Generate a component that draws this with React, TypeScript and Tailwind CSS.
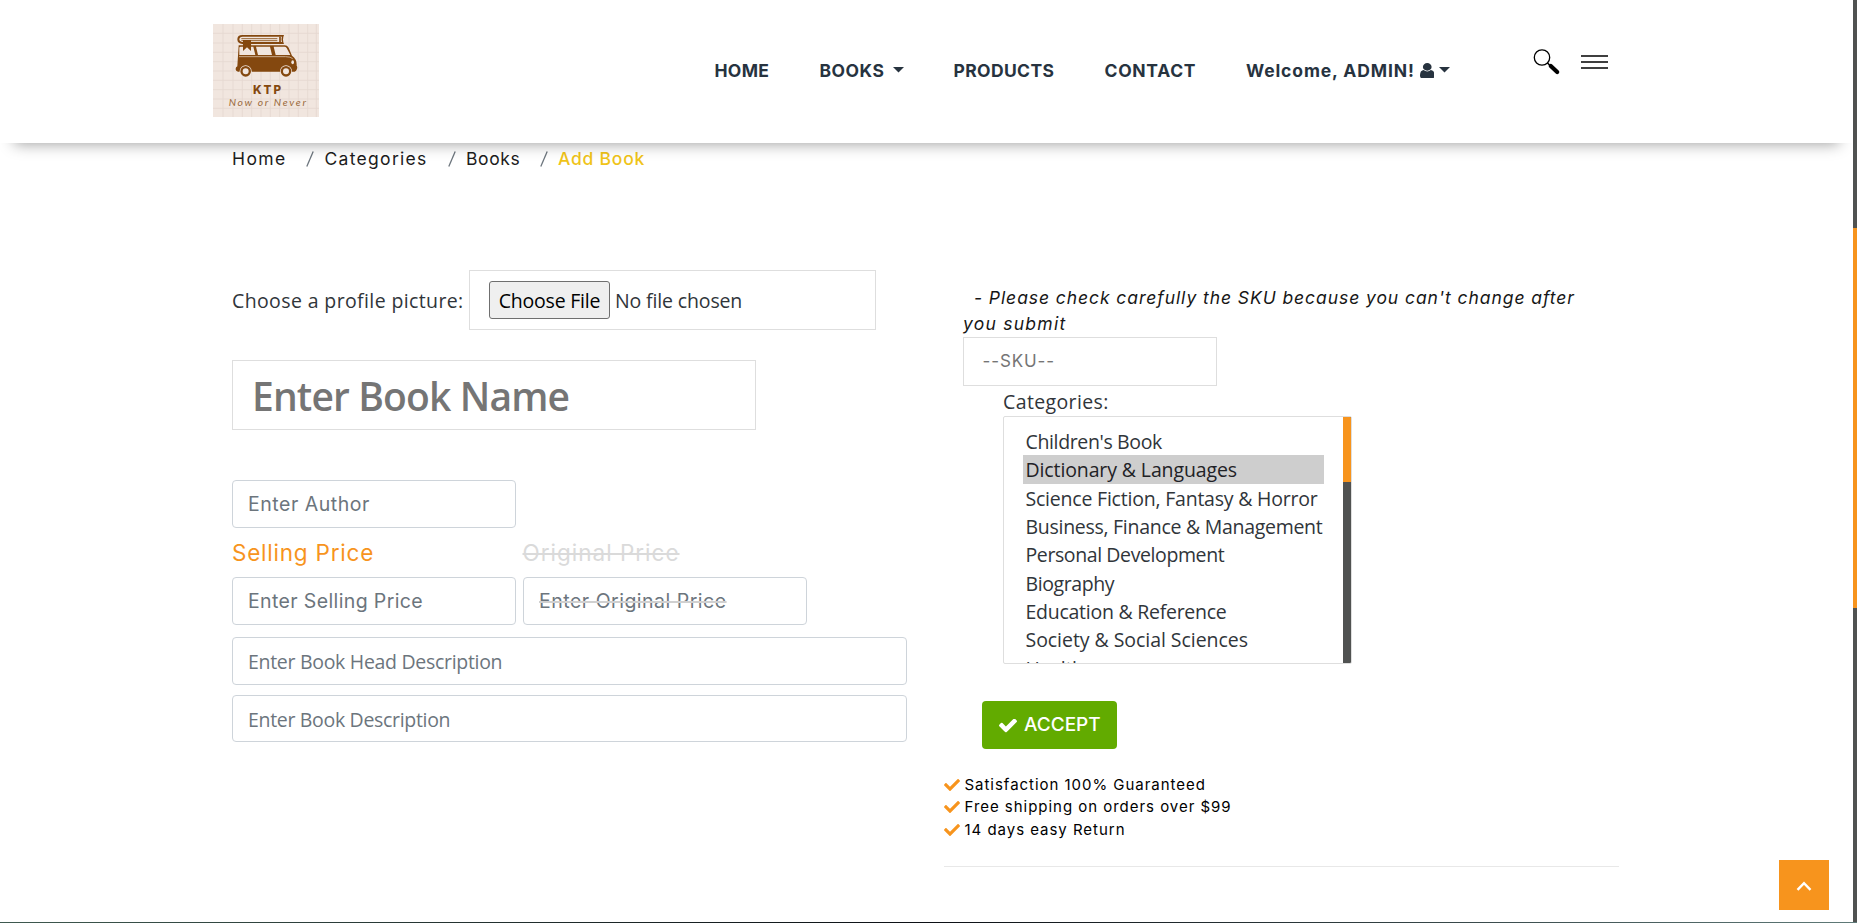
import { FaCheck } from "react-icons/fa";

const categories = [
  { name: "Children's Book", tracking: "tracking-[-0.36px]" },
  { name: "Dictionary & Languages", tracking: "tracking-[-0.12px]", selected: true },
  { name: "Science Fiction, Fantasy & Horror", tracking: "tracking-[-0.21px]" },
  { name: "Business, Finance & Management", tracking: "tracking-[-0.28px]" },
  { name: "Personal Development", tracking: "tracking-[-0.4px]" },
  { name: "Biography", tracking: "tracking-[-0.4px]" },
  { name: "Education & Reference", tracking: "tracking-[-0.26px]" },
  { name: "Society & Social Sciences", tracking: "tracking-[-0.05px]" },
  { name: "Health", tracking: "tracking-[-0.3px]" },
];

const perks = ["Satisfaction 100% Guaranteed", "Free shipping on orders over $99", "14 days easy Return"];

function Caret() {
  return (
    <svg className="h-[5.5px] w-[11px]" viewBox="0 0 11 5.5" fill="currentColor">
      <path d="M0 0h11L5.5 5.5z" />
    </svg>
  );
}

function UserIcon() {
  return (
    <svg className="ml-[5px] h-[15.5px] w-[14.5px]" viewBox="256 128 1280 1536" preserveAspectRatio="none" fill="currentColor">
      <path d="M1536 1399q0 109-62.5 187t-150.5 78h-854q-88 0-150.5-78t-62.5-187q0-85 8.5-160.5t31.5-152 58.5-131 94-89 134.5-34.5q131 128 313 128t313-128q76 0 134.5 34.5t94 89 58.5 131 31.5 152 8.5 160.5zm-256-887q0 159-112.5 271.5t-271.5 112.5-271.5-112.5-112.5-271.5 112.5-271.5 271.5-112.5 271.5 112.5 112.5 271.5z" />
    </svg>
  );
}

function AcceptIcon() {
  return (
    <svg className="mr-[7px] h-[14px] w-[18px]" viewBox="121 434 1550 1088" fill="currentColor">
      <path d="M1671 566q0 40-28 68l-724 724-136 136q-28 28-68 28t-68-28l-136-136-362-362q-28-28-28-68t28-68l136-136q28-28 68-28t68 28l294 295 656-657q28-28 68-28t68 28l136 136q28 28 28 68z" />
    </svg>
  );
}

function Logo() {
  return (
    <svg className="h-[93px] w-[106px] shrink-0" viewBox="39 42 318 279">
      <rect x="39" y="42" width="318" height="279" fill="#f1e6df" />
      <g stroke="#e5d9d1" strokeWidth="2.5">
        <path d="M69 42v279M99 42v279M127 42v279M155 42v279M183 42v279M211 42v279M239 42v279M267 42v279M295 42v279M323 42v279M349 42v279" />
        <path d="M39 70h318M39 99h318M39 127h318M39 155h318M39 183h318M39 211h318M39 239h318M39 267h318M39 295h318" />
      </g>
      <g fill="#84480f">
        <path d="M116 106h138q8 0 12 7l10 24q14 10 14 26v4q3 4 1 10t-7 8H114q-8-2-7-9 0-5 5-7z" />
        <path d="M127 75h125q-6 13 0 27H127q-15-1-15-14t15-13z" />
      </g>
      <path d="M128 80h118q-3 8 0 16H128q-10-1-10-8t10-8z" fill="#f1e6df" />
      <path d="M124 86h108M124 92h108" stroke="#84480f" strokeWidth="2.5" />
      <path d="M240 80v17" stroke="#84480f" strokeWidth="5" />
      <path d="M118 113q0-3 4-3h38l6 25h-48zM168 110h42l6 25h-42zM221 110h32q5 0 7 4l11 21h-44z" fill="#f1e6df" />
      <path d="M117 140h140q15 0 21 6" stroke="#d9bfa6" strokeWidth="2.5" fill="none" />
      <path d="M129 90h24v33l-12-11-12 11z" fill="#84480f" />
      <ellipse cx="278" cy="157" rx="4" ry="6" fill="#f1e6df" />
      {[137, 258].map((x) => (
        <g key={x}>
          <circle cx={x} cy="184" r="18" fill="#f1e6df" />
          <circle cx={x} cy="184" r="12.5" fill="#f1e6df" stroke="#84480f" strokeWidth="7" />
        </g>
      ))}
      <text x="159" y="251" textLength="84" fontFamily="Inter, sans-serif" fontWeight="800" fontSize="35" fill="#84480f">KTP</text>
      <text x="86" y="289" textLength="232" fontFamily="Lato, sans-serif" fontStyle="italic" fontSize="31" fill="#9a6a3c">Now or Never</text>
    </svg>
  );
}

function Header() {
  return (
    <header className="relative z-10 flex h-[143px] shrink-0 items-center bg-white pb-[2px] pl-[213px] shadow-[0_15px_14px_-14px_rgba(0,0,0,0.38)]">
      <Logo />
      <nav className="ml-[395.5px] flex shrink-0 items-center whitespace-nowrap text-[17.5px] leading-6 font-bold text-[#27333f]">
        <a className="w-[105px] tracking-[0.3px]">HOME</a>
        <a className="flex w-[134px] items-center tracking-[0.5px]">
          BOOKS
          <span className="ml-[9px] pb-[1px]"><Caret /></span>
        </a>
        <a className="w-[151px] tracking-[0.37px]">PRODUCTS</a>
        <a className="w-[141.5px] tracking-[0.69px]">CONTACT</a>
        <a className="flex w-[286.5px] items-center tracking-[0.88px]">
          Welcome, ADMIN!
          <UserIcon />
          <span className="ml-[4.5px] pb-[1px]"><Caret /></span>
        </a>
      </nav>
      <div className="flex shrink-0 items-center gap-5 pb-[18px]">
        <svg className="h-[28px] w-[28px]" viewBox="0 0 28 28" fill="none" stroke="#000">
          <circle cx="9" cy="9.5" r="7.7" strokeWidth="1.3" />
          <path d="M14.5 15l3 3" strokeWidth="1.6" />
          <path d="M17.8 18l6.4 6" strokeWidth="4.2" strokeLinecap="round" />
        </svg>
        <svg className="h-[14px] w-[27px]" viewBox="0 0 27 14" stroke="#000" strokeWidth="1.3">
          <path d="M0 1h27M0 7h27M0 13h27" />
        </svg>
      </div>
    </header>
  );
}

function Slash() {
  return (
    <svg className="mr-[10.5px] h-[16px] w-[8px] shrink-0" viewBox="0 0 8 16" fill="none" stroke="#6c757d" strokeWidth="1.3">
      <path d="M7.2.5L.8 15.5" />
    </svg>
  );
}

function Breadcrumb() {
  return (
    <nav className="flex h-6 items-center text-[17.5px] whitespace-nowrap text-[#1c1c1c]">
      <span className="w-[74px] tracking-[1.4px]">Home</span>
      <Slash />
      <span className="w-[123px] tracking-[1.3px]">Categories</span>
      <Slash />
      <span className="w-[73.5px] tracking-[0.6px]">Books</span>
      <Slash />
      <span className="font-medium tracking-[0.75px] text-[#f0c419]">Add Book</span>
    </nav>
  );
}

function BookForm() {
  return (
    <section className="flex w-[675px] flex-col font-['Open_Sans',sans-serif] text-[19.5px] whitespace-nowrap text-[#30353a]">
      <div className="flex h-[60px] items-center">
        <label className="w-[237px] pt-[2px] tracking-[0.38px]">Choose a profile picture:</label>
        <div className="flex h-[60px] w-[407px] items-center border border-[#dedede] pl-[19px]">
          <button className="h-[38px] w-[121px] rounded-[3px] border border-[#6f6f6f] bg-[#efefef] pt-[2px] tracking-[-0.22px] text-black">Choose File</button>
          <span className="ml-[5px] pt-[2px] tracking-[-0.14px]">No file chosen</span>
        </div>
      </div>
      <div className="mt-[30px] flex h-[70px] w-[524px] items-center border border-[#dedede] pt-[3px] pl-[19px] text-[39px] font-semibold tracking-[-0.86px] text-[#757575]">
        Enter Book Name
      </div>
      <div className="mt-[50px] flex h-12 w-[284px] items-center rounded-[4px] border border-[#ced4da] pt-[2px] pl-[15px] font-[Inter,sans-serif] text-[19.5px] tracking-[0.52px] text-[#6c757d]">
        Enter Author
      </div>
      <div className="mt-2 flex h-[34px] items-center font-[Inter,sans-serif] text-[22.5px]">
        <span className="w-[290.5px] tracking-[0.78px] text-[#f7941d]">Selling Price</span>
        <span className="tracking-[1px] text-[#dadada] line-through decoration-2">Original Price</span>
      </div>
      <div className="mt-[7px] flex gap-[7px] font-[Inter,sans-serif] text-[19.5px] text-[#6c757d]">
        <div className="flex h-12 w-[284px] items-center rounded-[4px] border border-[#ced4da] pt-[2px] pl-[15px] tracking-[0.37px]">Enter Selling Price</div>
        <div className="flex h-12 w-[284px] items-center rounded-[4px] border border-[#ced4da] pt-[2px] pl-[15px] tracking-[0.5px]">
          <span className="line-through decoration-[#d0d0d0] decoration-2">Enter Original Price</span>
        </div>
      </div>
      <div className="mt-3 flex h-12 items-center rounded-[4px] border border-[#ced4da] pt-[2px] pl-[15px] tracking-[-0.3px] text-[#6c757d]">Enter Book Head Description</div>
      <div className="mt-[10px] flex h-[47px] items-center rounded-[4px] border border-[#ced4da] pt-[2px] pl-[15px] tracking-[-0.32px] text-[#6c757d]">Enter Book Description</div>
    </section>
  );
}

function Sidebar() {
  return (
    <section className="flex w-[675px] flex-col items-start pt-[15px] whitespace-nowrap">
      <p className="ml-[19px] text-[17.5px] leading-[26px] text-[#161616] italic">
        <span className="ml-[11px] tracking-[0.93px]">- Please check carefully the SKU because you can't change after</span>
        <br />
        <span className="tracking-[1.25px]">you submit</span>
      </p>
      <div className="ml-[19px] flex h-[49px] w-[254px] items-center border border-[#dedede] pl-[18.5px] text-[17px] tracking-[0.9px] text-[#757575]">--SKU--</div>
      <div className="ml-[59px] mt-[2px] font-['Open_Sans',sans-serif] text-[19.5px] text-[#30353a]">
        <div className="h-7 leading-7 tracking-[0.38px]">Categories:</div>
        <div className="flex h-[248px] w-[349px] justify-between overflow-hidden rounded-[2px] border border-[#dedede]">
          <ul className="w-[320px] pt-[10px] pl-[19px]">
            {categories.map((c) => (
              <li key={c.name} className={c.selected ? "h-[28.33px] bg-[#cecece] pl-[2.5px] leading-[30px] text-[#1f2226]" : "h-[28.33px] pl-[2.5px] leading-[30px]"}>
                <span className={c.tracking}>{c.name}</span>
              </li>
            ))}
          </ul>
          <div className="w-2 bg-[#505251]">
            <div className="h-[65px] bg-[#f7941d]" />
          </div>
        </div>
      </div>
      <button className="mt-[37px] ml-[38px] flex h-12 w-[135px] items-center rounded-[4px] bg-[#62ab00] pt-[1px] pl-[17px] text-[19px] font-medium text-white">
        <AcceptIcon />
        ACCEPT
      </button>
      <ul className="mt-[25px] text-[15px] leading-[22.4px] tracking-[0.97px] text-black">
        {perks.map((perk) => (
          <li key={perk} className="flex items-center">
            <FaCheck className="mr-[4.5px] mb-[1px] h-[16px] w-[16px] text-[#f7941d]" />
            {perk}
          </li>
        ))}
      </ul>
      <hr className="mt-[25px] w-full border-[#e8e8e8]" />
    </section>
  );
}

export default function App() {
  return (
    <div className="relative flex h-[923px] w-full flex-col overflow-hidden bg-white font-[Inter,sans-serif]">
      <div className="flex min-h-0 flex-1">
        <div className="flex min-w-0 flex-1 flex-col">
          <Header />
          <main className="pt-[4px] pl-[232px]">
            <Breadcrumb />
            <div className="mt-[99px] flex gap-[37px]">
              <BookForm />
              <Sidebar />
            </div>
          </main>
        </div>
        <div className="w-[4px] bg-[#505251] pt-[228px]">
          <div className="h-[380px] bg-[#f7941d]" />
        </div>
      </div>
      <div className="h-px bg-linear-to-r from-[#3f5a50] via-[#0c1015] to-[#5f7a78]" />
      <button className="absolute right-[28px] bottom-[13px] flex h-[50px] w-[50px] items-center justify-center bg-[#f7941d]">
        <svg className="mt-[2px] h-[10px] w-[16px]" viewBox="0 0 16 10" fill="none" stroke="#fff" strokeWidth="2.4">
          <path d="M1.5 8.8L8 2.2l6.5 6.6" />
        </svg>
      </button>
    </div>
  );
}
